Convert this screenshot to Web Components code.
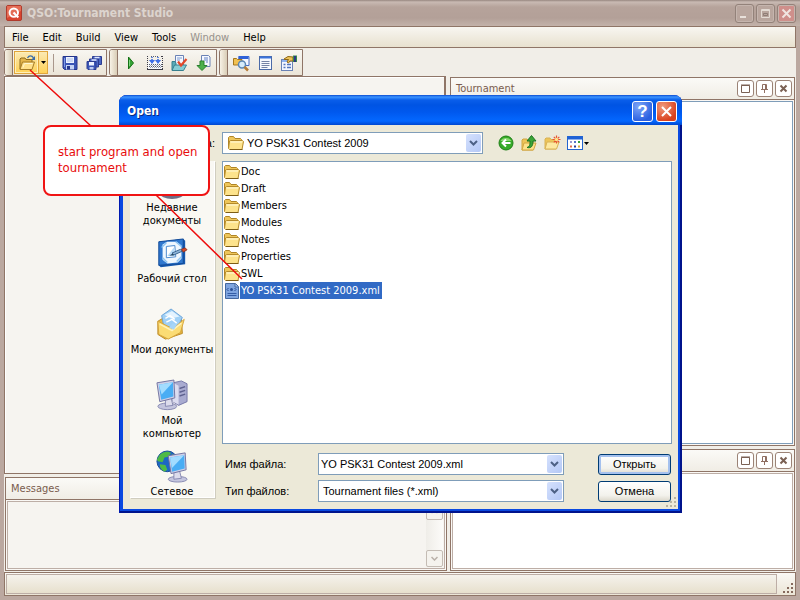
<!DOCTYPE html>
<html lang="en">
<head>
<meta charset="utf-8">
<title>QSO:Tournament Studio</title>
<style>
html,body{margin:0;height:100%;overflow:hidden}
body{font:11px/13px "DejaVu Sans Condensed","DejaVu Sans",sans-serif;color:#000;position:relative;
 --ui:"Liberation Sans",Arial,sans-serif;--line:#8f7567;--soft:#bdaea6;--field:#7f9db9;--face:#ece9d8}
</style>
</head>
<body>
<studio-window></studio-window>
<open-dialog></open-dialog>
<callout-note>start program and open tournament</callout-note>
<script>
const ICONS={
 logo:`<rect x=".5" y=".5" width="15" height="15" rx="1.5" fill="#d9442f" stroke="#b03a2c"/><path d="M1 1h14v5L1 13z" fill="#ef8f76" opacity=".55"/><circle cx="7.8" cy="7.6" r="4.2" fill="none" stroke="#fff" stroke-width="2"/><path d="M7.5 7.5l4.8 5" stroke="#fff" stroke-width="2.2"/>`,
 openFile:`<path d="M1 14V4l1-1h4l1 1.500h6V7" fill="#e5b64c" stroke="#8f6a1c"/><path d="M1 14.500L3.500 7H15.500L13 14.500z" fill="#ffe08a" stroke="#a67c26"/><path d="M4 12.500L5.500 8.500h8" fill="none" stroke="#fff6cf"/><path d="M8.500 3C10 .2 13 .2 14.500 3" fill="none" stroke="#3d6da8" stroke-width="1.300"/><path d="M16 1v4h-4z" fill="#3d6da8"/>`,
 save:`<path d="M1 1.500h14v13H2.500L1 13z" fill="#3a55b5" stroke="#26368c"/><rect x="4" y="2" width="8" height="6" fill="#eef3ff"/><path d="M5 4h6M5 6h6" stroke="#a9bde8"/><rect x="4" y="10" width="8" height="4.500" fill="#c4d2f4"/><rect x="5" y="11" width="3" height="3.500" fill="#26368c"/><path d="M2.500 3v9" stroke="#7d98e6"/>`,
 saveAll:`<g stroke="#2c3c92"><path d="M6.500 1.500h9v8h-9z" fill="#4a66c4"/><path d="M3.500 4h9v8h-9z" fill="#4a66c4"/><path d="M1 6.500h9v8H2L1 13.500z" fill="#3a55b5"/></g><path d="M8.500 2.500h5M5.500 5h5" stroke="#dfe8ff" stroke-width="1.500"/><rect x="3" y="7" width="5" height="3.500" fill="#eef3ff"/><rect x="3.500" y="12" width="4" height="2.500" fill="#bccbf2"/>`,
 run:`<path d="M5.500 2l5 6-5 6z" fill="#35a335" stroke="#157015"/><path d="M6.500 5v6" stroke="#7ed67e"/>`,
 build:`<path d="M1 7h14v8H1z" fill="#f6f8fc"/><path d="M0 1.500h2M14 1.500h2M.5 1v14M15.500 1v14" stroke="#3c3c46" stroke-dasharray="1 1"/><path d="M0 14.500h16" stroke="#3c3c46"/><path d="M2 9.500h13M2 11.500h13" stroke="#59606f" stroke-dasharray="1 1"/><path d="M3 10.500h12M3 12.500h12" stroke="#9aa0ae" stroke-dasharray="1 1"/><path d="M4 1.500h8" stroke="#59606f" stroke-dasharray="1 1"/><path d="M5 2v3M11 2v3" stroke="#3566dc" stroke-width="1.500" stroke-dasharray="1 1"/><path d="M2 5h6L5 9zM8 5h6l-3 4z" fill="#3c6ee8"/>`,
 check:`<path d="M4.500 .5h8v11h-8z" fill="#f3f7ff" stroke="#6a82b5"/><path d="M6 3h5M6 5h3" stroke="#7d9ad0"/><path d="M1 15V6.500h3l1 1.500v4" fill="#5aaab8" stroke="#37808f"/><path d="M1 15.500l2.500-5.500H15.500L12.500 15.500z" fill="#86ccd4" stroke="#37808f"/><path d="M7 6.500l3 4 5.500-6.500" fill="none" stroke="#e2492a" stroke-width="2.200"/>`,
 download:`<path d="M6.500 .5h7l1.500 1.500v9.500H6.500z" fill="#f5f8ff" stroke="#6a82b5"/><path d="M9 3h4M9 5h4M11 7h2" stroke="#5d7fc4"/><path d="M5 6h4v4.500h3L7 15.500 2 10.500h3z" fill="#4cb04c" stroke="#2a812f"/>`,
 search:`<path d="M6 1.500h10v9H6z" fill="#f4f7ff" stroke="#4a6fc4"/><path d="M5.500 2.500h10" stroke="#2f62d8" stroke-width="3"/><path d="M.5 3.500h3l1 1H9v5.500H.5z" fill="#f1c152" stroke="#a5761c"/><circle cx="9" cy="9.500" r="3.500" fill="#d7ecfb" stroke="#5a86b5" stroke-width="1.500"/><path d="M11.500 12l3.500 3.500" stroke="#b57a35" stroke-width="2.500"/>`,
 props:`<rect x="2.500" y="1.500" width="12" height="13" fill="#f7faff" stroke="#4a6aa8"/><path d="M3 2.500h11" stroke="#3c74dc" stroke-width="2"/><path d="M4.500 6.500h8M4.500 8.500h8M4.500 10.500h8M4.500 12.500h6" stroke="#7483a6"/>`,
 handProps:`<rect x=".5" y="4.500" width="11" height="11" fill="#f4f7ff" stroke="#6a82b5"/><path d="M1 6h10" stroke="#8fb2ee" stroke-width="2"/><path d="M2.500 9.500h2M6 9.500h4M2.500 12.500h2M6 12.500h4" stroke="#5476bd" stroke-width="1.500"/><path d="M3 4L7 1.500l5 .5v4H9L7.500 8 6 7l1.500-2.500H4z" fill="#edc35a" stroke="#8e6717"/><path d="M12 .5h4V7h-4z" fill="#3a8a4c"/><path d="M14 1v6" stroke="#2c3b86" stroke-width="2"/>`,
 folder:`<path d="M.5 12.500v-10l1-1h4l1.500 2h5.500l1 1v8z" fill="#eec65a" stroke="#b08526"/><path d="M.5 13.500l1-7.500 1-.5h12l1 1-1.500 8H1.500z" fill="#fde38c" stroke="#b58a2a"/><path d="M2.500 7h11.500" stroke="#fff9dc"/><path d="M2 14.500h12.500" stroke="#7d5d16"/>`,
 xml:`<path d="M1.500 .5h10l3 3v12h-13z" fill="#7fa5e0" stroke="#44689f"/><path d="M11 1v3h3" fill="#b8cdf1" stroke="#44689f"/><path d="M4.500 5L3 6.500 4.500 8M10.500 5L12 6.500 10.500 8" fill="none" stroke="#284d94"/><circle cx="7.500" cy="6.500" r="1.500" fill="#284d94"/><path d="M3.500 10.500h9M3.500 12.500h9" stroke="#345da6"/>`,
 back:`<circle cx="8" cy="8" r="7" fill="#36ab27" stroke="#208018"/><path d="M2.500 6a6 5 0 0 1 11 0z" fill="#8ad871"/><path d="M12.500 8H5M8 4.500L4.500 8 8 11.500" fill="none" stroke="#fff" stroke-width="2"/>`,
 up:`<path d="M1 15V5l1-1h4l1 1.500h5V15z" fill="#edc558" stroke="#d1a640"/><path d="M1 15l2-7h12l-2.500 7z" fill="#fde28a" stroke="#d1a640"/><path d="M6 12.500c3-1 3-3 3-6.500H6L10.500.5 15 6h-3c0 5-1.500 7.500-6 6.500z" fill="#3aa536" stroke="#1d7423"/>`,
 newFolder:`<path d="M1 14V4l1-1h4l1 1.500h5V14z" fill="#edc558" stroke="#d9b254"/><path d="M1 14l2-7h12l-2.500 7z" fill="#fde9a0" stroke="#d9b254"/><path d="M12.500 .5v8M8.500 4.500h8M9.800 1.800l5.500 5.500M15.300 1.800L9.800 7.300" stroke="#e8522e" stroke-width="1.200"/><circle cx="12.500" cy="4.500" r="1.700" fill="#ffe48a"/>`,
 views:`<rect x=".5" y="1.500" width="15" height="13" fill="#fff" stroke="#2365d0"/><path d="M1 3h14" stroke="#1f62d6" stroke-width="3"/><path d="M3 7h2" stroke="#9a9ad0" stroke-width="2"/><path d="M7 7h2" stroke="#5672c8" stroke-width="2"/><path d="M11 7h2" stroke="#3aa03a" stroke-width="2"/><path d="M3 11.500h2" stroke="#e06a4a" stroke-width="2"/><path d="M7 11.500h2" stroke="#2b3c96" stroke-width="2"/><path d="M11 11.500h2" stroke="#d6a93a" stroke-width="2"/>`
};
const BIG={
 recent:`<ellipse cx="17" cy="28" rx="13" ry="6" fill="#6d6e86"/><ellipse cx="16" cy="24" rx="12" ry="6" fill="#d5d6e6" stroke="#77779a"/>`,
 desktop:`<path d="M3 4L29 1l2 2v25L5 31l-2-2z" fill="#1558ae"/><path d="M3 4L29 1v26L3 29z" fill="#2f78cf" stroke="#124a96"/><path d="M7 7l5-3h10l5 4v14l-4 4-11 1-5-4z" fill="#eff7fe"/><path d="M6 10l5-5M21 4l6 5M7 21l5 5M27 20l-5 5" stroke="#8cc4f2" stroke-width="1.500"/><path d="M11 9l9-1 1 12-10 1z" fill="#fff" stroke="#4385cd"/><path d="M12 19l7-9 1 9z" fill="#b5dbf8"/><path d="M17 16l9-4 2 2-9 4z" fill="#8fb5d8" stroke="#35618d"/><path d="M27 12l4-1.500 2 2-4 2.500z" fill="#d84a2a" stroke="#8e3421"/><path d="M14 18.500l4-2 1 2z" fill="#26455f"/>`,
 docs:`<path d="M2 13l5-3 10 4 10-4 1 16-18 6-8-5z" fill="#eab93f" stroke="#b98822"/><path d="M16 0l12 9-7 14L8 17 6 7z" fill="#9fd0f6" stroke="#6aa2d6"/><path d="M9 6l8-4 8 6-9 2z" fill="#e3f3ff"/><path d="M10 10l5-3 5 4M11 14l6-3 5 4" fill="none" stroke="#fff" stroke-width="1.500"/><path d="M2 13l16 8 12-10-4 14-13 7-10-5z" fill="#fbdc74" stroke="#d4a33a"/><path d="M4 16l13 7 10-8" fill="none" stroke="#fff3bd" stroke-width="1.500"/><path d="M14 20l4-5 4 2-3 5z" fill="#a7d5f6"/>`,
 computer:`<path d="M18 3l9-2 6 3v19l-9 4-6-4z" fill="#a9abd0" stroke="#7476a6"/><path d="M18 3l6 3v20l-6-3z" fill="#dcdcf0"/><path d="M25 9l6-2M25 13l6-2M25 17l6-2" stroke="#5e618f" stroke-width="1.500"/><ellipse cx="12" cy="28" rx="10" ry="3.500" fill="#c4c5de" stroke="#8587b0"/><path d="M10 20l6-1 2 8-8 1z" fill="#dcdcec" stroke="#8587b0"/><path d="M1 3l18-3 1 19-16 4z" fill="#cfd0e8" stroke="#6f719f"/><path d="M3 5l15-2.500.5 15L5.500 21z" fill="#49adf4"/><path d="M3 5l15-2.500-12 13z" fill="#a2dcff"/>`,
 network:`<circle cx="12" cy="11" r="11" fill="#1d66c4" stroke="#174b93"/><path d="M4 4c4-4 9-4 12-2l-3 4-4 1-2 5-5-1-1-2zM4 14l6 1 2 5-3 2c-3-2-5-4-5-8zM17 3l4 3v4l-4-2z" fill="#4fba45"/><ellipse cx="23" cy="30" rx="10" ry="3" fill="#c4c5de" stroke="#8587b0"/><path d="M19 22l6-1 2 8-8 1z" fill="#dcdcec" stroke="#8587b0"/><path d="M13 5l18-3 1 18-16 4z" fill="#cfd0e8" stroke="#6f719f"/><path d="M15 7l15-2.500.5 14L17 22z" fill="#49adf4"/><path d="M15 7l15-2.500L17 18z" fill="#a2dcff"/>`
};
const RESET=`:host,*{box-sizing:border-box}button,input,select{font:inherit;color:inherit;margin:0;padding:0;border:0;background:none;appearance:none;outline:0}svg{display:block}`;
const define=(name,render)=>customElements.define(name,class extends HTMLElement{
 connectedCallback(){
  if(this.shadowRoot)return;
  const t=document.createElement('template');
  t.innerHTML=render(this);
  this.attachShadow({mode:'open'}).append(t.content.cloneNode(true));
 }});

define('ui-icon',el=>{
 const n=el.getAttribute('name'),big=n in BIG;
 return `<style>:host{display:block;flex:none}svg{display:block;overflow:visible}</style>
 <svg width="${big?32:16}" height="${big?32:16}" viewBox="${big?'0 0 34 34':'0 0 16 16'}" aria-hidden="true">${BIG[n]||ICONS[n]}</svg>`;});

define('caption-bar',()=>`<style>${RESET}
 :host{display:flex;align-items:center;gap:5px;height:26px;padding:0 4px 0 6px;
  background:linear-gradient(#978780 0,#c9bab3 2px,#b6a39b 7px,#b3a098 18px,#c3b2aa 100%)}
 h1{flex:1;margin:0;font-size:12px;font-weight:bold;color:#dcd4ce}
 .b{width:19px;height:19px;border:1px solid #93827a;border-radius:3px;background:#b9a69e;display:grid;place-items:center;box-shadow:inset 0 0 0 1px #c5b5ae;flex:none}
 .g{display:flex;gap:2px}.x{background:#cf8f8b}
 </style><ui-icon name="logo"></ui-icon><h1>QSO:Tournament Studio</h1>
 <div class="g"><button class="b" aria-label="Minimize"><svg width="11" height="11"><path d="M1 9h6" stroke="#e8e0da" stroke-width="2"/></svg></button>
 <button class="b" aria-label="Maximize"><svg width="11" height="11"><path d="M1.500 1.500h8v8h-8zM1 2.500h9" fill="none" stroke="#e3dad3"/><path d="M3.500 5.500h4v2h-4z" fill="none" stroke="#8f7d75"/></svg></button>
 <button class="b x" aria-label="Close"><svg width="11" height="11"><path d="M1.500 1.500l8 8m0-8l-8 8" stroke="#f0e4e0" stroke-width="2"/></svg></button></div>`);

define('menu-strip',()=>`<style>${RESET}
 :host{display:flex;height:22px;border:1px solid var(--line);background:linear-gradient(#f8f6f1,#e8e1cf)}
 button{padding:0 7px}button:disabled{color:#96918c}
 </style>${['File','Edit','Build','View','Tools','Window','Help'].map(m=>`<button${m=='Window'?' disabled':''}>${m}</button>`).join('')}`);

define('tool-group',()=>`<style>${RESET}
 :host{display:flex;height:27px;border:1px solid var(--line);border-radius:3px 0 0 3px;background:linear-gradient(#f8f6f1,#ebe5d8)}
 .grip{width:8px;border-right:1px solid var(--line);border-radius:2px 0 0 2px;background:linear-gradient(90deg,#f7f2e6,#d9cdb6)}
 .c{display:flex;align-items:center;gap:8px;padding:0 5px}
 :host([joined]) .c{padding:0 4px 0 1px;gap:0}
 </style><div class="grip"></div><div class="c"><slot></slot></div>`);

define('tool-button',el=>`<style>${RESET}
 :host{display:block}button{display:flex;align-items:center;justify-content:center;width:16px;height:16px}
 :host([hot]) button{width:25px;height:23px;background:linear-gradient(#fbe9b4,#ffd257);border:1px solid #e0a53c;box-shadow:inset 0 0 0 1px #fff0b8}
 :host([arrow]) button{width:9px;height:23px;background:linear-gradient(#fbe9b4,#ffd257);border:1px solid #e0a53c;border-left:0}
 </style><button aria-label="${el.getAttribute('label')}">${el.hasAttribute('arrow')?'<svg width="5" height="3"><path d="M0 0h5L2.500 3z"/></svg>':`<ui-icon name="${el.getAttribute('icon')}"></ui-icon>`}</button>`);

define('tool-strip',()=>`<style>:host{display:flex;gap:2px;margin-top:1px}
 .sep{width:1px;height:18px;background:#a9978c;margin:0 8px 0 5px}.sp{width:8px}</style>
 <tool-group joined><tool-button hot icon="openFile" label="Open"></tool-button><tool-button arrow label="Open recent"></tool-button><span class="sep"></span><tool-button icon="save" label="Save"></tool-button><span class="sp"></span><tool-button icon="saveAll" label="Save all"></tool-button></tool-group>
 <tool-group><tool-button icon="run" label="Run"></tool-button><tool-button icon="build" label="Build"></tool-button><tool-button icon="check" label="Check"></tool-button><tool-button icon="download" label="Import"></tool-button></tool-group>
 <tool-group><tool-button icon="search" label="Find"></tool-button><tool-button icon="props" label="List"></tool-button><tool-button icon="handProps" label="Properties"></tool-button></tool-group>`);

define('dock-pane',el=>{const t=el.getAttribute('label')||'';return `<style>${RESET}
 :host{display:flex;flex-direction:column;border:1px solid var(--line);background:#faf8f5}
 header{display:flex;align-items:center;gap:2px;height:22px;padding:0 2px 0 5px;border-bottom:1px solid var(--line);background:linear-gradient(#fbfaf7,#f0ede5);color:#7a5c4e}
 h2{flex:1;margin:0;font:inherit}
 header button{width:17px;height:17px;border:1px solid #9b8376;border-radius:3px;display:grid;place-items:center;background:#fff}
 .body{flex:1;margin:1px;border:1px solid var(--inner,var(--soft));background:var(--fill,#fff);display:flex;justify-content:flex-end;padding:1px}
 .bar{display:flex;flex-direction:column;justify-content:space-between;width:17px;background:linear-gradient(90deg,#efede8,#fcfbf9)}
 .bar button{height:17px;border:1px solid #c4bcb4;border-radius:2px;display:grid;place-items:center;background:#f5f3ee}
 </style><header><h2>${t}</h2>${el.hasAttribute('tools')?`
 <button aria-label="Maximize pane"><svg width="9" height="9"><path d="M.5 1.500h8v7h-8zM0 1h9" fill="none" stroke="#7a6154"/></svg></button>
 <button aria-label="Pin pane"><svg width="9" height="9"><path d="M2.500 5V.500h4V5M5.500 1v4M1 5.500h7M4.500 6v3" fill="none" stroke="#8f6f62"/></svg></button>
 <button aria-label="Close pane"><svg width="9" height="9"><path d="M1.500 1.500l6 6m0-6l-6 6" stroke="#7a6154" stroke-width="2"/></svg></button>`:''}</header>
 <div class="body">${el.hasAttribute('scroll')?`<div class="bar"><button aria-label="Scroll up"><svg width="7" height="5"><path d="M.5 4l3-3 3 3" fill="none" stroke="#b9b0a8" stroke-width="1.500"/></svg></button><button aria-label="Scroll down"><svg width="7" height="5"><path d="M.5 1l3 3 3-3" fill="none" stroke="#b9b0a8" stroke-width="1.500"/></svg></button></div>`:''}</div>`;});

define('status-strip',()=>`<style>${RESET}:host{display:flex;align-items:flex-end;height:24px;padding:1px;border:1px solid var(--line);background:linear-gradient(#faf8f4,#ebe5d6)}
 .m{flex:1;align-self:stretch;border:1px solid var(--soft);background:linear-gradient(#f5f2ec,#e7e0cd)}svg{margin-left:5px}</style>
 <div class="m" role="status"></div><svg width="12" height="12" fill="#85695c"><path d="M9 1h2v2H9zM9 5h2v2H9zM5 5h2v2H5zM9 9h2v2H9zM5 9h2v2H5zM1 9h2v2H1z"/></svg>`);

define('studio-window',()=>`<style>
 :host{display:flex;flex-direction:column;height:100vh;background:#bba8a0;box-sizing:border-box}
 .in{flex:1;display:flex;flex-direction:column;margin:0 4px 4px;background:#f1eee8;min-height:0}
 .dock{flex:1;display:grid;grid-template-columns:443fr 345fr;gap:3px;min-height:0;padding:0 1px 1px 0}
 .col{display:flex;flex-direction:column;gap:3px;min-height:0}
 .doc{flex:1;border:1px solid var(--line);border-right-width:2px;background:#f6f4f0;box-shadow:inset 1px 1px #fff;margin-right:1px}
 .msg{height:94px;--fill:#f6f4f0;margin-left:1px}.tour{flex:1;--inner:#7f9db9}.low{height:122px}.r{padding-top:1px}
 </style><caption-bar></caption-bar><div class="in"><menu-strip></menu-strip><tool-strip></tool-strip>
 <div class="dock"><div class="col"><div class="doc"></div><dock-pane class="msg" label="Messages" scroll></dock-pane></div>
 <div class="col r"><dock-pane class="tour" label="Tournament" tools></dock-pane><dock-pane class="low" tools></dock-pane></div></div>
 <status-strip></status-strip></div>`);

const ARROW=`<span class="dd"><svg width="9" height="6"><path d="M1 1l3.500 3.500L8 1" fill="none" stroke="#4d6185" stroke-width="2"/></svg></span>`;
define('combo-field',el=>`<style>${RESET}
 :host{display:flex;align-items:center;height:22px;border:1px solid var(--field);background:#fff;padding:1px;font-family:var(--ui)}
 input,select{flex:1;min-width:0;height:18px}
 ui-icon{margin:0 3px 0 4px}
 .dd{width:15px;height:18px;border-radius:2px;background:linear-gradient(135deg,#d5e1fd,#b4c8f6);display:grid;place-items:center;pointer-events:none}
 input{padding-left:1px}select{padding-left:${el.hasAttribute('icon')?0:3}px}
 </style>${el.hasAttribute('icon')?`<ui-icon name="${el.getAttribute('icon')}"></ui-icon>`:''}${el.hasAttribute('editable')?
 `<input aria-label="${el.getAttribute('label')}" value="${el.getAttribute('value')}">`:
 `<select aria-label="${el.getAttribute('label')}"><option>${el.getAttribute('value')}</option></select>`}${ARROW}`);

define('push-button',()=>`<style>${RESET}
 :host{display:block}button{width:100%;height:21px;font-family:var(--ui);border:1px solid #003c74;border-radius:3px;background:linear-gradient(#fff,#f3f2ec 70%,#dcd8cc)}
 :host([primary]) button{box-shadow:inset 0 0 0 2px #a5c1ee}</style><button><slot></slot></button>`);

define('place-item',el=>`<style>${RESET}:host{display:block;height:71px}
 button{display:flex;flex-direction:column;align-items:center;gap:2px;width:100%;padding-top:6px;line-height:13px;text-align:center}</style>
 <button><ui-icon name="${el.getAttribute('icon')}"></ui-icon><span><slot></slot></span></button>`);

define('file-item',el=>`<style>${RESET}:host{display:block}button{display:flex;align-items:center;height:17px}
 span{padding:0 2px 0 1px;line-height:17px;white-space:nowrap}:host([selected]) span{background:#316ac5;color:#fff}</style>
 <button><ui-icon name="${el.getAttribute('icon')||'folder'}"></ui-icon><span><slot></slot></span></button>`);

define('open-dialog',()=>`<style>${RESET}
 :host{position:absolute;left:119px;top:95px;width:563px;display:block;border-radius:8px 8px 0 0;background:#0a49e0;padding:0 4px 4px;
  box-shadow:inset 1px 0 #0019b0,inset -2px -2px #00138c}
 .cap{display:flex;align-items:center;gap:3px;height:30px;margin:0 -4px;padding:2px 5px 0 8px;border-radius:8px 8px 0 0;
  background:linear-gradient(#0a4bd0 0,#3c94ff 2px,#0a5eea 5px,#0054e3 10px,#0058ee 17px,#0468ff 26px,#0048d0 30px)}
 h2{flex:1;margin:0;font-size:12px;font-weight:bold;color:#fff;text-shadow:1px 1px #0a2a80}
 .cap button{width:21px;height:21px;border:1px solid #fff;border-radius:3px;display:grid;place-items:center;color:#fff;
  background:radial-gradient(circle at 30% 25%,#7ea6f8,#2a5fe0 75%);font:bold 17px/17px var(--ui)}
 .cap .x{background:radial-gradient(circle at 30% 25%,#f09a7d,#d9401c 75%)}
 .body{background:var(--face);padding:7px 6px 7px 7px;display:grid;grid-template-columns:85px 1fr;gap:7px;position:relative}
 .lbl{font-family:var(--ui)}
 .look{text-align:right;line-height:22px}
 .top{display:flex;align-items:center}.top combo-field{width:261px;margin-right:15px}
 .tools{display:flex;gap:7px;align-items:center}.tools button{height:16px}.tools .v{display:flex;align-items:center;gap:1px}
 .places{height:337px;overflow:hidden;background:#f9f8f3;border:1px solid #fff;border-width:0 1px 1px 0;box-shadow:1px 1px #d0cdbf}
 .main{display:flex;flex-direction:column}
 ul{list-style:none;margin:0 0 9px;padding:1px;height:283px;border:1px solid var(--field);background:#fff}
 .form{display:grid;grid-template-columns:93px 246px 1fr 73px;row-gap:5px;align-items:center;padding:0 1px 0 3px}
 .grip{position:absolute;right:1px;bottom:1px}
 </style>
 <div class="cap"><h2>Open</h2><button aria-label="Help">?</button><button class="x" aria-label="Close"><svg width="13" height="13"><path d="M2 2l9 9m0-9l-9 9" stroke="#fff" stroke-width="2"/></svg></button></div>
 <div class="body"><span class="lbl look">а:</span>
 <div class="top"><combo-field icon="folder" label="Папка" value="YO PSK31 Contest 2009"></combo-field>
 <div class="tools"><button aria-label="Back"><ui-icon name="back"></ui-icon></button><button aria-label="Up"><ui-icon name="up"></ui-icon></button><button aria-label="New folder"><ui-icon name="newFolder"></ui-icon></button><button class="v" aria-label="Views"><ui-icon name="views"></ui-icon><svg width="5" height="3"><path d="M0 0h5L2.500 3z"/></svg></button></div></div>
 <div class="places"><place-item icon="recent">Недавние<br>документы</place-item><place-item icon="desktop">Рабочий стол</place-item><place-item icon="docs">Мои документы</place-item><place-item icon="computer">Мой<br>компьютер</place-item><place-item icon="network">Сетевое</place-item></div>
 <div class="main"><ul>${['Doc','Draft','Members','Modules','Notes','Properties','SWL'].map(f=>`<li><file-item>${f}</file-item></li>`).join('')}<li><file-item icon="xml" selected>YO PSK31 Contest 2009.xml</file-item></li></ul>
 <div class="form"><span class="lbl">Имя файла:</span><combo-field editable label="Имя файла" value="YO PSK31 Contest 2009.xml"></combo-field><span></span><push-button primary>Открыть</push-button>
 <span class="lbl">Тип файлов:</span><combo-field label="Тип файлов" value="Tournament files (*.xml)"></combo-field><span></span><push-button>Отмена</push-button></div></div>
 <svg class="grip" width="12" height="12" fill="#b8b4a2"><path d="M9 1h2v2H9zM9 5h2v2H9zM5 5h2v2H5zM9 9h2v2H9zM5 9h2v2H5zM1 9h2v2H1z"/></svg></div>`);

define('callout-note',()=>`<style>
 :host{position:absolute;left:0;top:0;display:block;pointer-events:none}
 svg{position:absolute;left:0;top:0}
 p{position:absolute;left:43px;top:125px;box-sizing:border-box;width:167px;height:71px;margin:0;padding:17px 8px 0 13px;
  border:2px solid #f01414;border-radius:8px;background:#fff;color:#e80c0c;font-size:13px;line-height:16px}
 </style><p><slot></slot></p><svg width="260" height="290" stroke="#ee0c0c" stroke-width="1.500"><path d="M30 70l61 56M156 195l86 84"/></svg>`);
</script>
</body>
</html>
